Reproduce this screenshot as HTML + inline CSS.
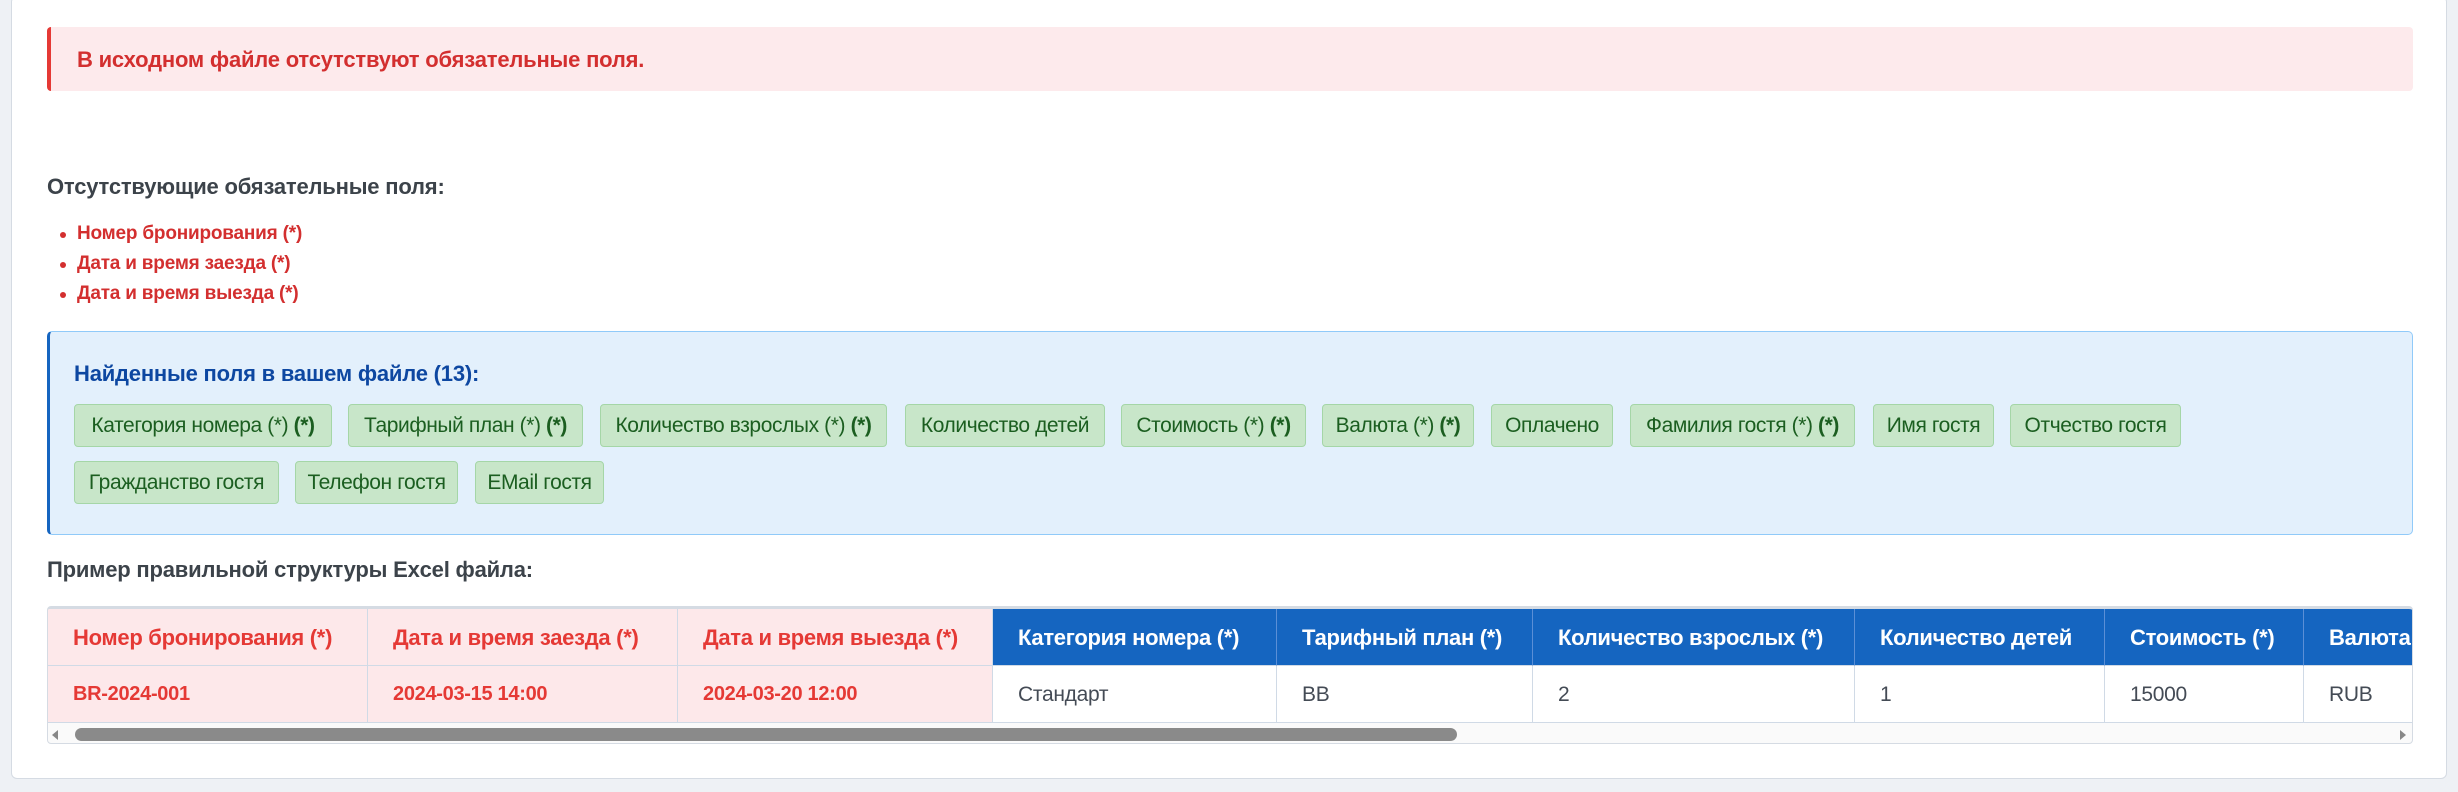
<!DOCTYPE html>
<html><head><meta charset="utf-8"><style>
*{margin:0;padding:0;box-sizing:border-box}
body{width:2458px;height:792px;background:#eef1f5;font-family:"Liberation Sans","DejaVu Sans",sans-serif;position:relative;overflow:hidden}
.card{position:absolute;left:11px;top:-4px;width:2436px;height:783px;background:#fff;border:1px solid #d5dbe3;border-radius:6px}
.a{position:absolute}
.alert{left:47px;top:27px;width:2366px;height:64px;background:#fdeaec;border-left:4px solid #e53935;border-radius:4px}
.alert span{position:absolute;left:26px;top:20px;color:#d32f2f;font-weight:bold;font-size:22px;letter-spacing:-.2px}
.h{font-weight:bold;font-size:22px;color:#3c434a;letter-spacing:-.2px}
.li{color:#d32f2f;font-weight:bold;font-size:19px;letter-spacing:-.2px}
.li:before{content:"";position:absolute;left:-17px;top:9px;width:6px;height:6px;border-radius:50%;background:#d32f2f}
.info{left:47px;top:331px;width:2366px;height:204px;background:#e3f0fc;border:1px solid #90caf9;border-left:3px solid #1565c0;border-radius:5px}
.chip{position:absolute;height:43px;background:#c8e6c9;border:1px solid #a5d6a7;border-radius:4px;color:#1b5e20;font-size:21px;line-height:41px;text-align:center;white-space:nowrap;letter-spacing:-.4px}
.chip b{color:#1b5e20}
.tbl{position:absolute;left:47px;top:606px;width:2366px;height:138px;border:1px solid #d5dbe3;border-top:3px solid #d5dbe3;border-radius:4px;overflow:hidden;background:#fafafa}
.c{position:absolute;height:57px;font-size:22px;line-height:57px;padding-left:25px;white-space:nowrap;letter-spacing:-.3px;border-right:1px solid #d0dae6;border-bottom:1px solid #d0dae6;overflow:hidden}
.hr{background:#fde8ea;color:#e53935;font-weight:bold}
.hb{background:#1565c0;color:#fff;font-weight:bold;border-right-color:#5b8fd6}
.dr{background:#fde8ea;color:#e53935;font-weight:bold;font-size:20px}
.dw{background:#fff;color:#444b55;font-size:21px}
</style></head><body>
<div class="card"></div>
<div class="a alert"><span>В исходном файле отсутствуют обязательные поля.</span></div>
<div class="a h" style="left:47px;top:174px">Отсутствующие обязательные поля:</div>
<div class="a li" style="left:77px;top:223px">Номер бронирования (*)</div>
<div class="a li" style="left:77px;top:253px">Дата и время заезда (*)</div>
<div class="a li" style="left:77px;top:283px">Дата и время выезда (*)</div>
<div class="a info"></div>
<div class="a h" style="left:74px;top:361px;color:#0d47a1">Найденные поля в вашем файле (13):</div>
<div class="chip" style="left:74px;top:404px;width:258px">Категория номера (*) <b>(*)</b></div>
<div class="chip" style="left:348px;top:404px;width:235px">Тарифный план (*) <b>(*)</b></div>
<div class="chip" style="left:600px;top:404px;width:287px">Количество взрослых (*) <b>(*)</b></div>
<div class="chip" style="left:905px;top:404px;width:200px">Количество детей</div>
<div class="chip" style="left:1121px;top:404px;width:185px">Стоимость (*) <b>(*)</b></div>
<div class="chip" style="left:1322px;top:404px;width:152px">Валюта (*) <b>(*)</b></div>
<div class="chip" style="left:1491px;top:404px;width:122px">Оплачено</div>
<div class="chip" style="left:1630px;top:404px;width:225px">Фамилия гостя (*) <b>(*)</b></div>
<div class="chip" style="left:1873px;top:404px;width:121px">Имя гостя</div>
<div class="chip" style="left:2010px;top:404px;width:171px">Отчество гостя</div>
<div class="chip" style="left:74px;top:461px;width:205px">Гражданство гостя</div>
<div class="chip" style="left:295px;top:461px;width:163px">Телефон гостя</div>
<div class="chip" style="left:475px;top:461px;width:129px">EMail гостя</div>
<div class="a h" style="left:47px;top:557px">Пример правильной структуры Excel файла:</div>
<div class="tbl">
<div class="c hr" style="left:0;top:0;width:320px">Номер бронирования (*)</div>
<div class="c hr" style="left:320px;top:0;width:310px">Дата и время заезда (*)</div>
<div class="c hr" style="left:630px;top:0;width:315px">Дата и время выезда (*)</div>
<div class="c hb" style="left:945px;top:0;width:284px">Категория номера (*)</div>
<div class="c hb" style="left:1229px;top:0;width:256px">Тарифный план (*)</div>
<div class="c hb" style="left:1485px;top:0;width:322px">Количество взрослых (*)</div>
<div class="c hb" style="left:1807px;top:0;width:250px">Количество детей</div>
<div class="c hb" style="left:2057px;top:0;width:199px">Стоимость (*)</div>
<div class="c hb" style="left:2256px;top:0;width:200px">Валюта (*)</div>
<div class="c dr" style="left:0;top:57px;width:320px">BR-2024-001</div>
<div class="c dr" style="left:320px;top:57px;width:310px">2024-03-15 14:00</div>
<div class="c dr" style="left:630px;top:57px;width:315px">2024-03-20 12:00</div>
<div class="c dw" style="left:945px;top:57px;width:284px">Стандарт</div>
<div class="c dw" style="left:1229px;top:57px;width:256px">BB</div>
<div class="c dw" style="left:1485px;top:57px;width:322px">2</div>
<div class="c dw" style="left:1807px;top:57px;width:250px">1</div>
<div class="c dw" style="left:2057px;top:57px;width:199px">15000</div>
<div class="c dw" style="left:2256px;top:57px;width:200px">RUB</div>
<div class="a" style="left:4px;top:121px;width:0;height:0;border-top:5px solid transparent;border-bottom:5px solid transparent;border-right:6px solid #888"></div>
<div class="a" style="left:27px;top:119px;width:1382px;height:13px;background:#8a8a8a;border-radius:7px"></div>
<div class="a" style="left:2352px;top:121px;width:0;height:0;border-top:5px solid transparent;border-bottom:5px solid transparent;border-left:6px solid #888"></div>
</div>
</body></html>
